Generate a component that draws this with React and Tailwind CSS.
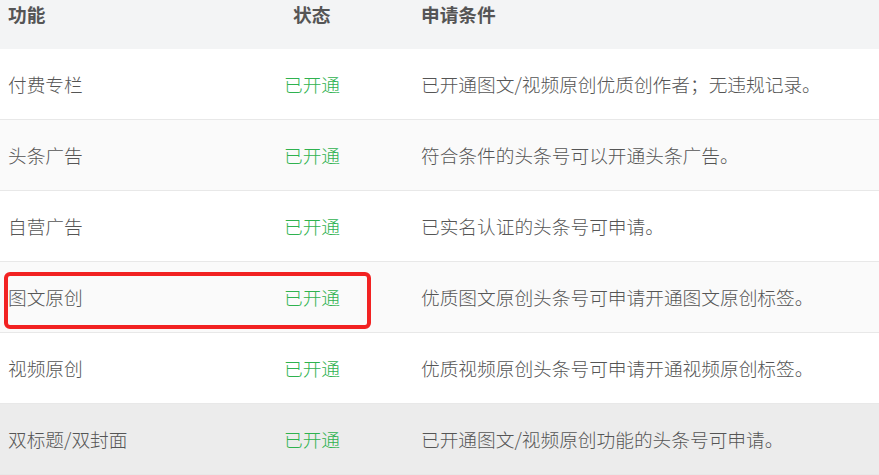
import React from 'react';

const rows = [
  { name: '付费专栏', cond: '已开通图文/视频原创优质创作者；无违规记录。', bg: 'bg-white' },
  { name: '头条广告', cond: '符合条件的头条号可以开通头条广告。', bg: 'bg-[#fafafa]' },
  { name: '自营广告', cond: '已实名认证的头条号可申请。', bg: 'bg-white' },
  { name: '图文原创', cond: '优质图文原创头条号可申请开通图文原创标签。', bg: 'bg-[#fafafa]', marked: true },
  { name: '视频原创', cond: '优质视频原创头条号可申请开通视频原创标签。', bg: 'bg-white' },
  { name: '双标题/双封面', cond: '已开通图文/视频原创功能的头条号可申请。', bg: 'bg-[#ececec]' },
];

const App = () => {
  return (
    <div className="w-[879px] h-[475px] overflow-hidden bg-white font-['Microsoft_YaHei','Noto_Sans_CJK_SC',sans-serif] text-[18.7px]">
      {/* Header */}
      <div className="flex h-[49px] bg-[#f3f4f5] font-bold text-[#555] leading-[28px]">
        <div className="w-[276px] pl-[8px]">功能</div>
        <div className="w-[137px] pl-[17px]">状态</div>
        <div className="flex-1 pl-[8px]">申请条件</div>
      </div>

      {/* Rows */}
      {rows.map((row, i) => (
        <div
          key={i}
          className={`relative flex items-center h-[71px] border-b border-[#e8e8e8] font-light text-[#555] ${row.bg}`}
        >
          <div className="w-[276px] pl-[8px]">{row.name}</div>
          <div className="w-[137px] pl-[8px] text-[#2fb24f]">已开通</div>
          <div className="flex-1 pl-[8px]">{row.cond}</div>
          {row.marked && (
            <div className="absolute left-[4px] top-[10px] w-[367px] h-[57px] border-4 border-[#f22222] rounded-[6px]" />
          )}
        </div>
      ))}
    </div>
  );
};

export default App;
